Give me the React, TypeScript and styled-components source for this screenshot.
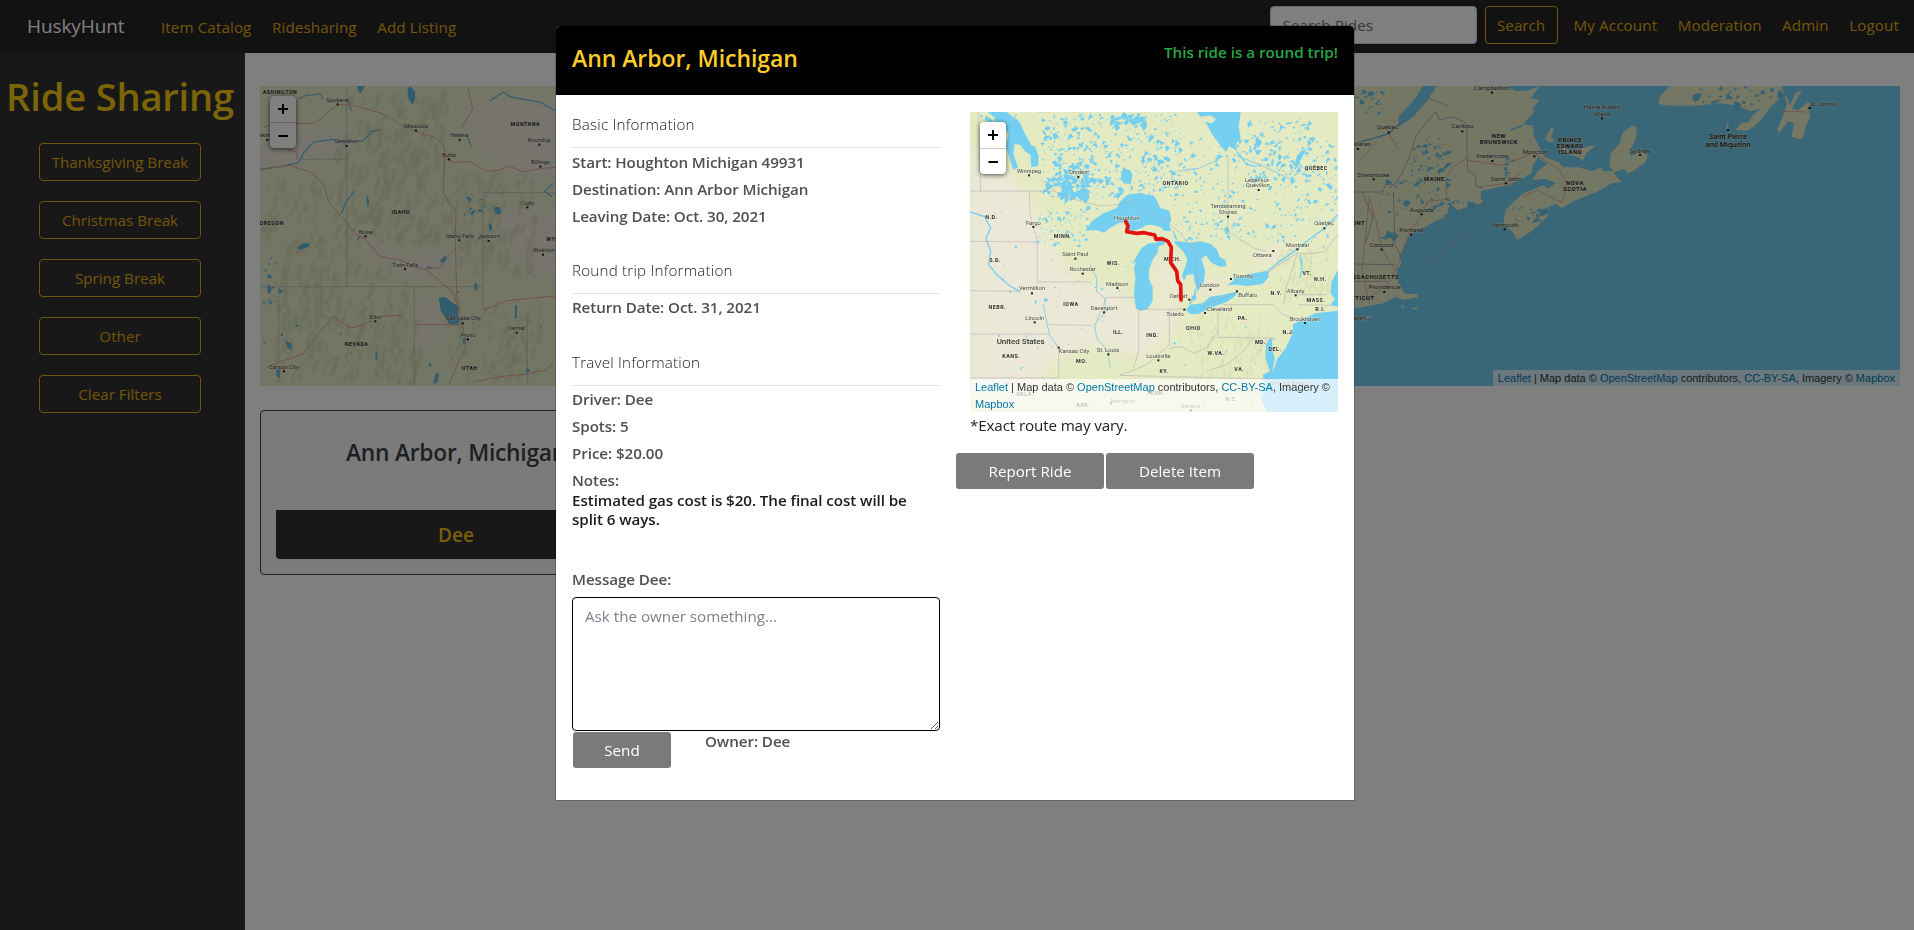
import React from "react";
import styled, { createGlobalStyle, css } from "styled-components";

const GlobalStyle = createGlobalStyle`
  * { box-sizing: border-box; }
  body {
    margin: 0;
    background: #fff;
    color: #212529;
    font-family: "Open Sans", "Noto Sans", sans-serif;
    font-size: 15.2px;
    line-height: 24px;
    overflow: hidden;
  }
  h1, h2, h3, h4, p { margin: 0; }
  button, input, textarea { font-family: inherit; font-size: inherit; letter-spacing: inherit; }
`;

/* ---------- page shell ---------- */

const Page = styled.div`
  display: flex;
  flex-direction: column;
  height: 100vh;
`;

const Navbar = styled.nav`
  display: flex;
  align-items: center;
  height: 53px;
  flex: none;
  padding: 0 15px 0 27px;
  background: #252525;
`;

const Brand = styled.a`
  width: 134px;
  font-size: 19px;
  letter-spacing: -0.1px;
  color: #fff;
  padding-bottom: 1px;
`;

const NavLinks = styled.div<{ $end?: boolean }>`
  display: flex;
  gap: 20.5px;
  ${(p) => p.$end && css`margin-left: 16px; padding-bottom: 3px;`}
`;

const NavLink = styled.a`
  color: #e2ab14;
  letter-spacing: 0.1px;
  white-space: nowrap;
`;

const SearchForm = styled.form`
  display: flex;
  gap: 8px;
  margin-left: auto;
  padding-bottom: 3px;
`;

const SearchInput = styled.input`
  width: 207px;
  height: 38px;
  padding: 0 12px;
  border: 1px solid #ced4da;
  border-radius: 4px;
  background: #fff;
  &::placeholder { color: #6c757d; opacity: 1; }
`;

const OutlineButton = styled.button<{ $width: number }>`
  width: ${(p) => p.$width}px;
  height: 38px;
  padding: 0;
  border: 1px solid #e2ab14;
  border-radius: 4px;
  background: transparent;
  color: #e2ab14;
`;

const Main = styled.div`
  display: flex;
  flex: 1;
  min-height: 0;
`;

const Sidebar = styled.aside`
  display: flex;
  flex-direction: column;
  align-items: center;
  gap: 20px;
  width: 245px;
  padding-top: 21px;
  padding-right: 5px;
  background: #303030;
`;

const SidebarTitle = styled.h1`
  height: 49px;
  line-height: 45px;
  font-size: 38px;
  font-weight: 600;
  letter-spacing: -0.15px;
  color: #f7cb10;
  white-space: nowrap;
`;

const Content = styled.main`
  flex: 1;
  min-width: 0;
  padding: 33px 14px 0 15px;
`;

/* ---------- ride card ---------- */

const RideCard = styled.article`
  width: 392px;
  height: 165px;
  margin-top: 24px;
  padding: 24px 15px 15px;
  border: 1px solid #444;
  border-radius: 4px;
  background: #f7f7f7;
  text-align: center;
`;

const RideTitle = styled.h2`
  height: 75px;
  font-size: 22.8px;
  line-height: 36px;
  font-weight: 600;
  letter-spacing: -0.25px;
  color: #3c4044;
`;

const RideDriver = styled.div`
  height: 49px;
  line-height: 50px;
  border-radius: 0 0 4px 4px;
  background: #303030;
  color: #f0bc14;
  font-size: 19px;
  font-weight: 600;
`;

/* ---------- map ---------- */

const MapFrame = styled.div`
  position: relative;
  height: 300px;
  overflow: hidden;
  background: #75cff0;
`;

const MapDrawing = styled.svg`
  display: block;
  width: 100%;
  height: 300px;
  font-family: Roboto, sans-serif;
`;

const ZoomControl = styled.div`
  position: absolute;
  top: 10px;
  left: 10px;
  width: 26px;
  border-radius: 4px;
  background: #fff;
  box-shadow: 0 1px 5px rgba(0, 0, 0, 0.65);
`;

const ZoomButton = styled.div`
  display: flex;
  align-items: center;
  justify-content: center;
  height: 26px;
  & + & { border-top: 1px solid #ccc; }
`;

const Attribution = styled.div`
  position: absolute;
  right: 0;
  bottom: 0;
  padding: 0 5px;
  background: rgba(255, 255, 255, 0.7);
  color: #333;
  font: 11px/16.5px "Liberation Sans", Arial, sans-serif;
  a { color: #0078a8; }
`;

type LabelKind = "state" | "city" | "country" | "place";
type Mark = [number, number, string, LabelKind, number?, number?];

const labelStyle: Record<LabelKind, React.SVGProps<SVGTextElement>> = {
  state: { fontSize: 16, fontWeight: 700, letterSpacing: 1.5, fill: "#2a2a2a" },
  city: { fontSize: 17.5, fontWeight: 400, fill: "#484848" },
  country: { fontSize: 24, fontWeight: 500, fill: "#333" },
  place: { fontSize: 20, fontWeight: 500, fill: "#222" },
};

const Labels = ({ marks }: { marks: Mark[] }) => (
  <g textAnchor="middle">
    {marks.map(([x, y, text, kind, dx, dy], i) => (
      <g key={i}>
        <text x={x} y={y} stroke="#f2f4dc" strokeOpacity="0.6" strokeWidth="3" paintOrder="stroke" {...labelStyle[kind]}>
          {text}
        </text>
        {dx !== undefined && <rect x={dx - 3} y={(dy as number) - 3} width="6" height="6" fill="#222" />}
      </g>
    ))}
  </g>
);

const makeRandom = (seed: number) => () => {
  seed = (seed * 16807) % 2147483647;
  return seed / 2147483647;
};

/* Small irregular ponds spread over a rectangle. */
const ponds = (seed: number, count: number, x: number, y: number, w: number, h: number, size: number) => {
  const r = makeRandom(seed);
  let d = "";
  for (let i = 0; i < count; i++) {
    const px = x + r() * w;
    const py = y + r() * h;
    const s = size * (0.25 + r() * r() * 1.2);
    d += `M${px.toFixed(1)},${py.toFixed(1)}l${(s * r()).toFixed(1)},${(-s * r()).toFixed(1)}l${(s * 0.5).toFixed(1)},${(s * (r() - 0.2)).toFixed(1)}l${(s * 0.4).toFixed(1)},${(s * r() * 0.5).toFixed(1)}l${(-s * r()).toFixed(1)},${(s * r() * 0.7).toFixed(1)}l${(-s * 0.6).toFixed(1)},${(s * (r() - 0.1)).toFixed(1)}z`;
  }
  return d;
};

/* Short wavy ridge strokes for shaded relief. */
const ridges = (seed: number, count: number, x: number, y: number, w: number, h: number, len: number) => {
  const r = makeRandom(seed);
  let d = "";
  for (let i = 0; i < count; i++) {
    const l = len * (0.4 + r());
    d += `M${(x + r() * w).toFixed(0)},${(y + r() * h).toFixed(0)}q${(l * (r() - 0.7)).toFixed(0)},${(l * 0.4).toFixed(0)} ${(-l * r() * 0.4).toFixed(0)},${l.toFixed(0)}`;
  }
  return d;
};

const lakeMarks: Mark[] = [
  [207, 205, "Winnipeg", "city", 207, 212], [355, 209, "Dryden", "city", 355, 217],
  [647, 240, "ONTARIO", "state"], [1069, 196, "QUÉBEC", "state"],
  [893, 231, "Lebel-sur-", "city"], [893, 248, "Quévillon", "city", 896, 256],
  [804, 309, "Temiskaming", "city"], [804, 327, "Shores", "city", 804, 336],
  [94, 344, "N.D.", "state"], [220, 360, "Fargo", "city", 220, 367], [308, 399, "MINN.", "state"],
  [500, 347, "Houghton", "city"], [1092, 361, "Quebec", "city", 1093, 371],
  [1012, 427, "Montreal", "city", 1012, 434], [907, 458, "Ottawa", "city", 940, 439],
  [346, 453, "Saint Paul", "city", 346, 462], [105, 471, "S.D.", "state"], [460, 480, "WIS.", "state"],
  [638, 468, "MICH.", "state"], [368, 499, "Rochester", "city", 368, 507],
  [849, 519, "Toronto", "city", 813, 523], [1041, 510, "VT.", "state"], [1081, 528, "N.H.", "state"],
  [472, 543, "Madison", "city", 472, 550], [216, 557, "Vermillion", "city", 216, 566],
  [749, 547, "London", "city", 751, 555], [863, 576, "Buffalo", "city", 831, 560],
  [1007, 564, "Albany", "city", 1007, 572], [949, 572, "N.Y.", "state"], [1068, 592, "MASS.", "state"],
  [656, 580, "Detroit", "city", 688, 585], [112, 612, "NEBR.", "state"], [333, 603, "IOWA", "state"],
  [432, 615, "Davenport", "city", 432, 623], [779, 619, "Cleveland", "city", 735, 625],
  [645, 633, "Toledo", "city", 673, 615], [1081, 620, "R.I.", "state"],
  [224, 646, "Lincoln", "city", 224, 653], [1035, 648, "Brookhaven", "city", 1035, 655],
  [848, 646, "PA.", "state"], [700, 676, "OHIO", "state"], [475, 688, "ILL.", "state"],
  [577, 698, "IND.", "state"], [985, 687, "N.J.", "state"], [182, 719, "United States", "country"],
  [901, 717, "MD.", "state"], [945, 739, "DEL.", "state"], [342, 746, "Kansas City", "city", 296, 729],
  [444, 742, "St. Louis", "city", 445, 749], [154, 760, "KANS.", "state"], [365, 775, "MO.", "state"],
  [595, 759, "Louisville", "city", 595, 767], [768, 750, "W.VA.", "state"], [612, 804, "KY.", "state"],
  [838, 798, "VA.", "state"], [195, 873, "OKLA.", "state"], [370, 907, "ARK.", "state"],
  [488, 894, "Memphis", "city", 452, 896], [588, 870, "TENN.", "state"], [814, 888, "N.C.", "state"],
  [692, 910, "Seneca", "city", 692, 917], [988, 841, "Virginia Beach", "city"],
];

const RouteMap = () => (
  <MapDrawing viewBox="30 22 1104 900" preserveAspectRatio="none">
    <defs>
      <filter id="soften"><feGaussianBlur stdDeviation="22" /></filter>
    </defs>
    <rect x="30" y="22" width="1104" height="900" fill="#e4eac2" />
    <g filter="url(#soften)" fill="#ece8d8">
      <path d="M20,130 L130,200 L200,260 L260,400 L330,520 L450,540 L540,620 L640,600 L650,680 L540,760 L420,720 L300,760 L200,860 L20,880 Z" />
      <path d="M590,470 L640,460 L660,560 L600,610 Z M730,520 L800,520 L790,560 L730,580 Z" />
      <path d="M900,440 L1000,420 L960,470 L860,490 Z" />
    </g>
    <path fill="none" stroke="#c9d3a6" strokeWidth="5" opacity="0.35" d={ridges(83, 90, 700, 620, 230, 280, 30) + ridges(12, 60, 960, 420, 150, 150, 26)} />
    <g fill="#75cff0">
      <path d={ponds(7, 460, 240, 30, 420, 250, 10)} />
      <path d={ponds(29, 300, 640, 100, 490, 250, 9)} />
      <path d={ponds(51, 120, 860, 40, 190, 190, 12)} />
      <path d={ponds(77, 110, 280, 180, 100, 100, 17)} />
      <path d={ponds(91, 80, 230, 310, 150, 110, 9)} />
      <path d={ponds(97, 80, 640, 350, 330, 60, 9)} />
      <path d={ponds(31, 70, 60, 30, 110, 60, 15)} />
      <path d={ponds(15, 80, 50, 300, 450, 560, 6)} />
      <path d={ponds(63, 40, 640, 640, 260, 260, 6)} />
      <path d={ponds(44, 40, 960, 240, 150, 240, 8)} />
      <path d={ponds(111, 34, 450, 36, 110, 24, 14)} />
      <path d="M376,378 L395,350 432,325 470,310 480,292 500,272 540,264 560,270 580,272 592,290 600,310 628,318 634,345 628,360 634,380 612,378 600,366 575,360 558,362 545,370 520,378 496,374 500,350 476,356 450,370 432,384 410,376Z" />
      <path d="M528,612 L522,570 526,520 522,490 528,470 516,478 530,455 545,430 566,416 590,414 600,404 618,402 612,420 596,424 592,446 580,462 568,490 566,520 578,548 578,590 562,614 544,618Z" />
      <path d="M640,408 L690,414 720,410 752,418 772,436 778,456 796,466 800,484 780,486 754,474 738,452 724,462 736,500 730,536 712,560 704,530 700,508 680,512 672,528 666,512 676,486 682,464 670,440 652,424Z" />
      <path d="M694,574 L708,572 710,582 700,588Z M678,616 L690,600 728,596 750,576 790,570 832,560 826,574 800,592 760,606 714,628 690,628Z" />
      <path d="M802,542 L820,528 820,520 868,508 900,502 925,498 926,518 908,538 860,544 830,540Z" />
      <path d="M710,22 L742,62 758,92 786,128 798,142 808,124 830,138 828,118 842,100 836,66 842,22Z" />
      <path d="M84,22 L140,22 180,54 196,90 214,122 226,126 236,156 234,184 214,188 212,152 196,140 180,120 164,118 160,148 174,188 160,196 138,124 146,88 110,44Z" />
      <path d="M484,204 L494,192 510,196 518,210 512,236 494,238 482,224Z" />
      <path d="M1040,132 L1030,150 1010,190 1004,196 1008,160 1022,140Z" />
      <path d="M1134,618 L1066,626 1000,658 996,690 976,732 952,762 936,808 944,762 936,722 948,706 930,700 918,720 916,760 930,800 908,810 916,846 900,880 922,922 1134,922Z" />
      <path d="M1134,496 L1114,532 1112,566 1124,584 1110,602 1134,606Z" />
    </g>
    <path fill="#e4eac2" d="M722,36 L750,32 768,44 756,56 734,52Z M936,706 l10,-2 2,26 -8,20z" />
    <path fill="none" stroke="#75cff0" strokeWidth="4" d="M30,322 L74,336 92,370 78,400 92,440 86,480 112,512 150,544 180,560 M1090,374 L1040,410 1014,432 960,470 924,498 M1020,450 L1026,490 1020,520 M706,552 L704,574 688,600 M640,380 L650,405 M830,140 L860,180 890,185 M1134,330 L1092,372" />
    <path fill="none" stroke="#93cfe2" strokeWidth="3" d="M390,480 L410,520 410,560 434,580 438,620 404,660 410,700 444,740 450,790 M250,600 L268,690 296,730 M774,165 L720,190 650,200 M820,150 L900,180 1004,230" />
    <path fill="none" stroke="#aaa2b0" strokeWidth="1.7" opacity="0.85" d="M30,259 L280,259 330,280 420,304 468,300 508,292 600,338 660,384 706,446 714,556 688,590 M726,606 L832,562 M920,506 L1010,446 1062,446 1094,440 1134,388 M208,259 L210,330 222,374 232,410 232,532 M30,410 L232,412 M232,532 L392,532 M30,558 L180,560 M262,660 L396,662 M30,688 L268,688 M296,730 L296,820 30,820 M404,662 L440,578 522,578 M536,614 L536,740 520,790 M536,614 L628,614 676,612 M628,614 L628,720 M628,720 L560,780 480,812 M774,620 L774,698 945,700 M790,600 L940,600 970,630 1000,640 M970,600 L980,545 1014,440 M1014,600 L1110,602 M1014,570 L1100,570 M804,160 L804,380 880,430 920,440 M480,812 L860,822 930,822 M54,22 L62,259 M232,22 L300,20 M774,680 L740,730 700,745 660,725 628,732 M880,700 L850,740 800,780 740,800" />
    <Labels marks={lakeMarks} />
    <path fill="none" stroke="#e3120f" strokeWidth="11" strokeLinecap="round" strokeLinejoin="round" d="M497,350 L504,364 500,381 530,386 552,384 584,391 588,404 606,402 624,410 634,428 632,474 650,500 653,528 662,540 663,586" />
  </MapDrawing>
);

const westMarks: Mark[] = [
  [120, 71, "ASHINGTON", "state"], [292, 95, "Spokane", "city", 293, 103], [528, 174, "Missoula", "city", 528, 182],
  [658, 202, "Helena", "city", 659, 210], [856, 168, "MONTANA", "state"], [898, 217, "Roundup", "city", 898, 224],
  [901, 282, "Billings", "city", 901, 290], [627, 260, "Butte", "city", 627, 268], [320, 220, "Lewiston", "city", 320, 228],
  [76, 200, "Yakima", "city", 82, 210],
  [483, 431, "IDAHO", "state"], [95, 466, "OREGON", "state"], [862, 404, "Cody", "city", 862, 412],
  [377, 491, "Boise", "city", 376, 499], [660, 504, "Idaho Falls", "city", 658, 511],
  [746, 504, "Jackson", "city", 746, 513], [962, 512, "WYOMING", "state"], [912, 547, "Riverton", "city", 909, 554],
  [496, 590, "Twin Falls", "city", 495, 597], [406, 748, "Elko", "city", 406, 754],
  [670, 751, "Salt Lake City", "city", 668, 760], [684, 800, "Provo", "city", 684, 808],
  [830, 779, "Vernal", "city", 830, 788], [350, 829, "NEVADA", "state"], [689, 901, "UTAH", "state"],
  [132, 896, "Carson City", "city", 132, 904],
];

const eastMarks: Mark[] = [
  [415, 59, "Campbellton", "city", 415, 68], [716, 118, "Havre Aubert", "city"], [716, 137, "Island", "city", 716, 145],
  [1320, 108, "St. John's", "city", 1283, 114], [130, 177, "Quebec", "city", 133, 187], [334, 175, "Caribou", "city", 334, 184],
  [434, 203, "NEW", "state"], [434, 222, "BRUNSWICK", "state"], [629, 217, "PRINCE", "state"],
  [629, 235, "EDWARD", "state"], [629, 253, "ISLAND", "state"], [533, 252, "Moncton", "city", 531, 259],
  [820, 249, "Sydney", "city", 820, 255], [1060, 206, "Saint Pierre", "place", 1060, 180],
  [1060, 231, "and Miquelon", "place"], [416, 265, "Fredericton", "city", 416, 273],
  [52, 229, "-Rivières", "city", 49, 237], [91, 320, "Sherbrooke", "city", 92, 328], [258, 334, "MAINE", "state"],
  [453, 332, "Saint John", "city", 453, 340], [642, 344, "NOVA", "state"], [642, 363, "SCOTIA", "state"],
  [223, 427, "Augusta", "city", 223, 433], [26, 465, "VERMONT", "state"], [195, 487, "Portland", "city", 194, 494],
  [450, 472, "Yarmouth", "city", 450, 478], [114, 531, "Concord", "city", 114, 539],
  [84, 627, "MASSACHUSETTS", "state"], [121, 658, "Providence", "city", 121, 666],
  [32, 690, "CONNECTICUT", "state"], [26, 750, "Brookhaven", "city"],
];

const OverviewMap = () => (
  <MapDrawing viewBox="0 0 1640 300" preserveAspectRatio="none">
    <defs>
      <filter id="haze"><feGaussianBlur stdDeviation="18" /></filter>
      <filter id="relief"><feGaussianBlur stdDeviation="2.5" /></filter>
    </defs>
    <rect width="1090" height="300" fill="#e8ecca" />
    <g transform="translate(-20 -16) scale(0.33333)">
      <g filter="url(#haze)" fill="#ece8da">
        <path d="M60,170 L300,180 330,250 60,300Z M350,480 L500,560 640,520 640,600 500,620 360,520Z M640,100 L950,90 950,350 740,260Z M530,680 L600,700 600,840 530,840Z M780,400 L950,420 950,640 800,560Z" />
      </g>
      <path filter="url(#relief)" fill="none" stroke="#c2c7a2" strokeWidth="7" opacity="0.5" d={ridges(5, 150, 300, 180, 340, 330, 40) + ridges(19, 140, 120, 570, 420, 340, 44) + ridges(23, 100, 640, 300, 250, 290, 32) + ridges(41, 50, 330, 60, 300, 140, 36) + ridges(33, 50, 70, 320, 240, 220, 34) + ridges(61, 60, 620, 700, 300, 210, 34)} />
      <g fill="#62b9dc">
        <path d="M596,684 L614,680 640,700 656,708 654,738 662,750 650,766 630,764 614,740 602,722Z" />
        <path d="M510,48 L524,62 526,84 518,104 506,88 502,56Z M350,48 L376,48 360,72Z M170,534 L190,520 210,520 206,530 180,540Z M82,644 L92,648 92,672 82,668Z M136,810 L154,822 156,840 142,834Z M108,898 L120,900 120,924 110,918Z M586,912 L598,908 592,936 580,942Z M762,412 L780,410 784,432 766,432Z M746,460 L756,464 756,480 748,484Z M702,640 L712,640 712,664 704,660Z M380,370 L388,394 384,414 380,398Z M670,802 L682,806 676,824 668,820Z M826,704 L832,706 830,746 824,746Z M406,844 L412,850 412,872 406,868Z M600,572 L618,554 620,570 606,580Z" />
        <path d={ponds(9, 18, 62, 560, 60, 160, 11) + ponds(14, 10, 670, 380, 60, 60, 14) + ponds(21, 26, 70, 480, 840, 440, 8)} />
      </g>
      <path fill="none" stroke="#62b9dc" strokeWidth="3.5" d="M60,298 L120,290 176,278 190,250 220,216 280,208 310,214 370,212 394,184 420,180 M176,86 L200,76 240,72 250,88 M324,86 L334,122 M680,196 L694,232 M750,92 L790,66 810,80 850,88 900,96 946,122 M940,340 L914,364 936,380 M304,430 L316,400 344,362 M360,500 L352,510 M560,590 L580,594" />
      <path fill="none" stroke="#b3b0b4" strokeWidth="2" d="M320,48 L320,650 M60,650 L728,650 M116,652 L116,870 M523,652 L523,948 M728,368 L728,718 M728,368 L946,368 M186,268 L320,268 M862,740 L862,948" />
      <path fill="none" stroke="#e3a596" strokeWidth="3" d="M70,172 L110,160 216,160 240,148 276,116 296,104 330,104 420,128 454,146 480,164 530,184 590,206 612,228 614,262 610,370 630,404 648,420 646,520 650,676 660,720 M614,264 L640,278 690,274 740,304 780,300 808,288 850,306 900,296 946,292 M60,298 L150,286 220,310 254,350 266,396 310,446 350,496 376,506 420,560 480,570 550,598 600,592 640,540 M560,600 L640,668 668,764 678,830 650,890 626,946 M526,764 L664,764 M730,720 L800,692 880,684 946,678 M80,892 L130,872 190,852 236,790 280,738 330,774 370,766 410,740 490,736 M684,52 L698,120 664,172 M700,936 L780,920 860,912 920,900 940,876 M140,240 L170,246 172,270" />
      <Labels marks={westMarks} />
    </g>
    <g transform="translate(1080 -16) scale(0.36603 0.33333)">
      <g fill="#ebefcb">
        <path d="M-20,48 L225,48 210,80 160,140 160,170 200,140 240,90 264,48 456,48 480,64 510,62 546,48 520,84 546,90 528,112 528,130 500,162 526,166 530,200 544,230 560,262 596,276 610,292 650,292 690,304 712,292 718,304 748,302 752,316 770,336 742,340 700,366 640,392 606,414 590,402 570,410 566,440 528,480 484,510 470,484 446,466 452,420 500,370 556,346 566,356 590,340 560,326 526,330 540,304 566,282 540,262 528,284 524,310 490,330 460,346 420,354 386,362 384,384 392,396 376,404 350,392 346,412 322,420 300,402 290,440 262,452 236,470 212,480 188,500 162,560 168,580 154,604 160,640 178,672 210,672 212,682 172,690 154,680 136,690 118,700 60,712 -20,720Z" />
        <path d="M560,206 L578,170 584,178 576,202 588,214 570,216Z M600,226 L630,244 660,234 702,224 672,250 664,272 650,260 612,250Z M736,290 L740,250 764,220 772,190 798,166 810,172 808,208 790,246 796,260 818,240 840,256 836,276 800,304 784,308 776,296 752,306Z" />
        <path d="M870,100 L874,80 890,60 900,48 1206,48 1214,76 1190,96 1172,116 1150,150 1130,170 1110,182 1080,180 1096,160 1116,156 1130,134 1150,116 1120,124 1090,108 1040,100 960,108 884,106Z" />
        <path d="M1206,60 L1222,100 1210,140 1194,180 1200,188 1224,154 1240,158 1234,200 1250,206 1264,204 1272,170 1284,140 1280,112 1290,96 1276,98 1252,120 1234,116 1252,80 1262,58 1244,70 1230,106 1220,80Z M1056,160 L1062,166 1060,178 1056,176Z M166,704 L176,708 170,718Z M194,712 L214,714 204,720Z M38,744 L94,738 60,750Z" />
      </g>
      <g fill="#70c3e0">
        <path d={ponds(3, 70, 190, 200, 100, 210, 13) + ponds(35, 22, 110, 330, 80, 110, 12) + ponds(46, 18, 470, 410, 80, 50, 14) + ponds(58, 40, 960, 50, 240, 60, 16) + ponds(71, 20, 40, 60, 70, 70, 12) + ponds(88, 16, 446, 260, 20, 60, 10) + ponds(95, 50, 240, 390, 160, 60, 10) + ponds(105, 10, 112, 485, 30, 25, 20)} />
      </g>
      <path fill="none" stroke="#5fb6d6" strokeWidth="4" d="M38,220 L90,206 134,190 164,160 M466,180 L500,166" />
      <path fill="none" stroke="#a39dab" strokeWidth="2.4" d="M38,366 L116,366 124,344 150,344 166,316 190,260 208,196 262,124 272,150 310,140 346,160 348,300 370,316 372,348 390,354 M146,366 L150,520 166,560 M38,582 L150,584 M38,634 L130,634 M60,366 L90,440 70,520" />
      <path fill="none" stroke="#e0a797" strokeWidth="2.5" d="M240,84 L300,110 M134,190 L160,240 M50,280 L100,214 M346,270 L440,286 500,262 530,250 600,300 M350,260 L310,290 290,320 290,388 240,394 220,440 188,490 160,580 128,650 60,694 M380,350 L460,340 500,300 M606,398 L540,360 500,380 M606,398 L620,340 600,300 M80,380 L100,460 114,536 150,600 M80,380 L60,600 80,700 M1200,124 L1276,126" />
      <text transform="translate(228 592) rotate(-37)" fontSize="22" letterSpacing="3" fill="#9ab4c8" fontStyle="italic">Gulf of Maine</text>
      <Labels marks={eastMarks} />
    </g>
  </MapDrawing>
);

const MapPanel = ({ children }: { children: React.ReactNode }) => (
  <MapFrame>
    {children}
    <ZoomControl>
      <ZoomButton>
        <svg width="12" height="12" viewBox="0 0 12 12"><path d="M6 1v10M1 6h10" stroke="#000" strokeWidth="2" /></svg>
      </ZoomButton>
      <ZoomButton>
        <svg width="12" height="12" viewBox="0 0 12 12"><path d="M1.5 6h9.5" stroke="#000" strokeWidth="2" /></svg>
      </ZoomButton>
    </ZoomControl>
    <Attribution>
      <a>Leaflet</a> | Map data © <a>OpenStreetMap</a> contributors, <a>CC-BY-SA</a>, Imagery © <a>Mapbox</a>
    </Attribution>
  </MapFrame>
);

/* ---------- modal ---------- */

const Backdrop = styled.div`
  position: fixed;
  inset: 0;
  display: flex;
  justify-content: center;
  align-items: flex-start;
  padding: 26px 4px 0 0;
  background: rgba(0, 0, 0, 0.5);
`;

const Dialog = styled.section`
  width: 798px;
  height: 774px;
  border-radius: 4px 4px 0 0;
  background: #fff;
  box-shadow: 0 0 0 1px rgba(0, 0, 0, 0.2);
`;

const DialogHeader = styled.header`
  display: flex;
  justify-content: space-between;
  height: 69px;
  padding: 9px 16px;
  border-radius: 4px 4px 0 0;
  background: #000;
`;

const DialogTitle = styled.h3`
  font-size: 23px;
  line-height: 46px;
  font-weight: 600;
  letter-spacing: -0.05px;
  color: #ffcd2a;
`;

const TripBadge = styled.span`
  line-height: 34px;
  font-weight: 600;
  font-size: 15.2px;
  letter-spacing: 0;
  color: #28a745;
`;

const DialogBody = styled.div`
  display: grid;
  grid-template-columns: 368px 368px;
  column-gap: 30px;
  padding: 17px 16px 0;
`;

const InfoSection = styled.section`
  padding-bottom: 24px;
`;

const SectionTitle = styled.h4`
  height: 36px;
  margin-bottom: 4.6px;
  border-bottom: 1px solid #e2e2e2;
  font-size: 15.2px;
  font-weight: 300;
  letter-spacing: 0.2px;
  color: #222;
`;

const Fact = styled.p<{ $last?: boolean; $tight?: boolean }>`
  margin-bottom: ${(p) => (p.$tight ? 0 : 7.8)}px;
  line-height: 19.3px;
  font-weight: 600;
  letter-spacing: -0.08px;
  color: #505050;
`;

const Notes = styled.p`
  margin-bottom: 40px;
  line-height: 19.4px;
  font-weight: 600;
  letter-spacing: -0.08px;
  color: #1c1c1c;
`;

const MessageBox = styled.textarea`
  display: block;
  width: 368px;
  height: 134px;
  padding: 6px 12px;
  border: 1px solid #000;
  border-radius: 4px;
  line-height: 24px;
  resize: vertical;
  outline: none;
  &::placeholder { color: #7b8289; opacity: 1; }
`;

const SendRow = styled.div`
  display: flex;
  gap: 34px;
  padding: 1px 0 0 1px;
`;

const GreyButton = styled.button<{ $width: number }>`
  width: ${(p) => p.$width}px;
  height: 36px;
  padding: 0;
  border: 0;
  border-radius: 3px;
  background: #7a7a7a;
  color: #fff;
`;

const RouteNote = styled.p`
  margin-top: 1px;
  letter-spacing: -0.13px;
  color: #222;
`;

const ActionRow = styled.div`
  display: flex;
  gap: 2px;
  margin: 16px 0 0 -14px;
`;

const breaks = ["Thanksgiving Break", "Christmas Break", "Spring Break", "Other", "Clear Filters"];

const sections = [
  { title: "Basic Information", facts: ["Start: Houghton Michigan 49931", "Destination: Ann Arbor Michigan", "Leaving Date: Oct. 30, 2021"] },
  { title: "Round trip Information", facts: ["Return Date: Oct. 31, 2021"] },
];

export default function App() {
  return (
    <>
      <GlobalStyle />
      <Page>
        <Navbar>
          <Brand>HuskyHunt</Brand>
          <NavLinks>
            <NavLink>Item Catalog</NavLink>
            <NavLink>Ridesharing</NavLink>
            <NavLink>Add Listing</NavLink>
          </NavLinks>
          <SearchForm>
            <SearchInput placeholder="Search Rides" />
            <OutlineButton type="button" $width={73}>Search</OutlineButton>
          </SearchForm>
          <NavLinks $end>
            <NavLink>My Account</NavLink>
            <NavLink>Moderation</NavLink>
            <NavLink>Admin</NavLink>
            <NavLink>Logout</NavLink>
          </NavLinks>
        </Navbar>
        <Main>
          <Sidebar>
            <SidebarTitle>Ride Sharing</SidebarTitle>
            {breaks.map((name) => (
              <OutlineButton key={name} $width={162}>{name}</OutlineButton>
            ))}
          </Sidebar>
          <Content>
            <MapPanel><OverviewMap /></MapPanel>
            <RideCard>
              <RideTitle>Ann Arbor, Michigan</RideTitle>
              <RideDriver>Dee</RideDriver>
            </RideCard>
          </Content>
        </Main>
      </Page>
      <Backdrop>
        <Dialog>
          <DialogHeader>
            <DialogTitle>Ann Arbor, Michigan</DialogTitle>
            <TripBadge>This ride is a round trip!</TripBadge>
          </DialogHeader>
          <DialogBody>
            <div>
              {sections.map(({ title, facts }) => (
                <InfoSection key={title}>
                  <SectionTitle>{title}</SectionTitle>
                  {facts.map((fact) => <Fact key={fact}>{fact}</Fact>)}
                </InfoSection>
              ))}
              <SectionTitle>Travel Information</SectionTitle>
              <Fact>Driver: Dee</Fact>
              <Fact>Spots: 5</Fact>
              <Fact>Price: $20.00</Fact>
              <Fact $tight>Notes:</Fact>
              <Notes>Estimated gas cost is $20. The final cost will be split 6 ways.</Notes>
              <Fact>Message Dee:</Fact>
              <MessageBox placeholder="Ask the owner something..." />
              <SendRow>
                <GreyButton $width={98}>Send</GreyButton>
                <Fact>Owner: Dee</Fact>
              </SendRow>
            </div>
            <div>
              <MapPanel><RouteMap /></MapPanel>
              <RouteNote>*Exact route may vary.</RouteNote>
              <ActionRow>
                <GreyButton $width={148}>Report Ride</GreyButton>
                <GreyButton $width={148}>Delete Item</GreyButton>
              </ActionRow>
            </div>
          </DialogBody>
        </Dialog>
      </Backdrop>
    </>
  );
}
